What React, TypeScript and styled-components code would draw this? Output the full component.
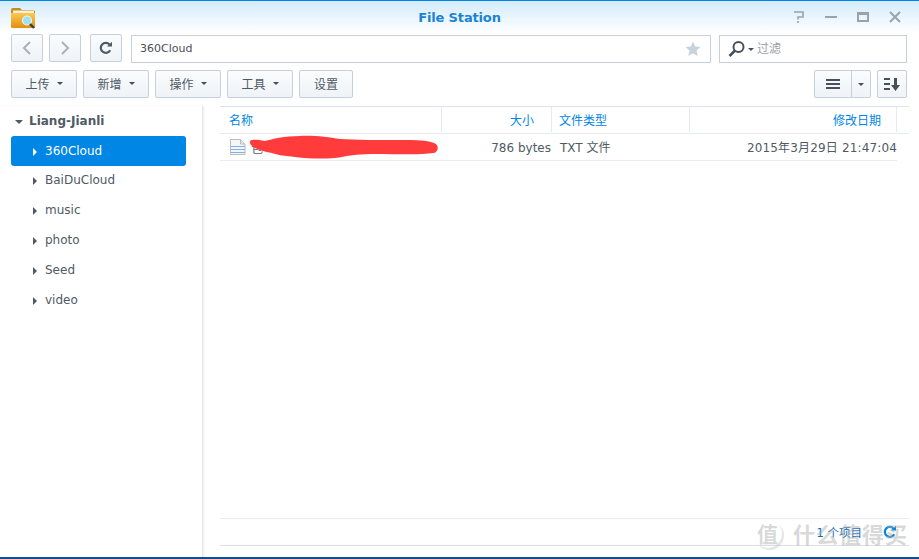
import React from 'react';
import styled, { createGlobalStyle } from 'styled-components';

const folders: string[] = ['360Cloud', 'BaiDuCloud', 'music', 'photo', 'Seed', 'video'];
const actions: string[] = ['上传', '新增', '操作', '工具'];

const App: React.FC = () => {
  return (
    <Window>
      <GlobalStyle />
      <TitleBar>
        <FolderLogo />
        <Title>File Station</Title>
        <WindowControls>
          <svg width="14" height="14" viewBox="0 0 14 14"><path d="M2 2h9v5H6v2.500M6 11v2" fill="none" stroke="#9aa3ab" strokeWidth="1.600" /></svg>
          <svg width="14" height="14" viewBox="0 0 14 14"><rect x="1" y="6" width="12" height="2" fill="#9aa3ab" /></svg>
          <svg width="14" height="14" viewBox="0 0 14 14"><path d="M1 2h12v10H1z M3 5v5h8V5z" fill="#9aa3ab" fillRule="evenodd" /></svg>
          <svg width="14" height="14" viewBox="0 0 14 14"><path d="M2 2l10 10M12 2L2 12" stroke="#9aa3ab" strokeWidth="2" /></svg>
        </WindowControls>
      </TitleBar>

      <NavBar>
        <IconButton>
          <svg width="12" height="16" viewBox="0 0 12 16"><path d="M9 2L3 8l6 6" fill="none" stroke="#a9b2bb" strokeWidth="2" /></svg>
        </IconButton>
        <IconButton>
          <svg width="12" height="16" viewBox="0 0 12 16"><path d="M3 2l6 6-6 6" fill="none" stroke="#a9b2bb" strokeWidth="2" /></svg>
        </IconButton>
        <RefreshButton>
          <svg width="14" height="14" viewBox="0 0 14 14">
            <path d="M11.200 9.200A5 5 0 1 1 10.600 3.600" fill="none" stroke="#4f5a64" strokeWidth="2.200" />
            <path d="M8 5.600h5V.8z" fill="#4f5a64" />
          </svg>
        </RefreshButton>
        <AddressBar>
          <span>360Cloud</span>
          <svg width="16" height="16" viewBox="0 0 16 16"><path d="M8 .5l2.200 5 5.300.5-4 3.600 1.200 5.400L8 12.200 3.300 15l1.200-5.400-4-3.600 5.300-.5z" fill="#c7d2de" /></svg>
        </AddressBar>
        <SearchBox>
          <svg width="18" height="18" viewBox="0 0 18 18">
            <circle cx="10.500" cy="7" r="5" fill="none" stroke="#46505a" strokeWidth="2" />
            <path d="M6.800 10.800L1.500 16" stroke="#46505a" strokeWidth="2.600" />
          </svg>
          <SearchCaret />
          <SearchHint>过滤</SearchHint>
        </SearchBox>
      </NavBar>

      <ActionBar>
        {actions.map((a) => (
          <ActionButton key={a}>{a}<Caret /></ActionButton>
        ))}
        <SettingsButton>设置</SettingsButton>
        <ViewGroup>
          <ViewMain>
            <svg width="14" height="10" viewBox="0 0 14 10"><path d="M0 0h14v2H0zM0 4h14v2H0zM0 8h14v2H0z" fill="#46505a" /></svg>
          </ViewMain>
          <ViewCaret><Caret /></ViewCaret>
        </ViewGroup>
        <SortButton>
          <svg width="16" height="13" viewBox="0 0 16 13"><path d="M0 0h6v2H0zM0 5h6v2H0zM0 10h6v2H0zM10 0h3v7h3l-4.500 6L7 7h3z" fill="#46505a" /></svg>
        </SortButton>
      </ActionBar>

      <Body>
        <Sidebar>
          <RootRow><RootCaret />Liang-Jianli</RootRow>
          {folders.map((f, i) => (
            <TreeRow key={f} $selected={i === 0}>
              <TreeArrow $selected={i === 0} />
              {f}
            </TreeRow>
          ))}
        </Sidebar>
        <Main>
          <HeaderRow>
            <NameHead>名称</NameHead>
            <SizeHead>大小</SizeHead>
            <TypeHead>文件类型</TypeHead>
            <DateHead>修改日期</DateHead>
          </HeaderRow>
          <FileRow>
            <NameCell>
              <FileIcon />
              <span>包</span>
              <Scribble viewBox="0 0 188 24">
                <path d="M0 6C3 4 8 5 15 6C22 4 35 1 50 1C62 0 78 2 90 4C105 5 130 5 150 5C165 5 180 5 186 9C189 12 188 17 184 18C170 20 150 19 125 19C112 19 100 20 92 22C80 24 62 24 45 22C35 21 28 20 22 18C14 17 8 15 3 12C1 10 -1 8 0 6Z" fill="#ff3b3b" />
              </Scribble>
            </NameCell>
            <SizeCell>786 bytes</SizeCell>
            <TypeCell>TXT 文件</TypeCell>
            <DateCell>2015年3月29日 21:47:04</DateCell>
          </FileRow>
          <Spacer />
          <Footer>
            <Count>1 个项目</Count>
            <svg width="14" height="14" viewBox="0 0 14 14">
              <path d="M11.200 9.200A5 5 0 1 1 10.600 3.600" fill="none" stroke="#0086e5" strokeWidth="2.200" />
              <path d="M8 5.600h5V.8z" fill="#0086e5" />
            </svg>
          </Footer>
        </Main>
      </Body>

      <Watermark>
        <WatermarkSeal>值</WatermarkSeal>
        <span>什么值得买</span>
      </Watermark>
    </Window>
  );
};

const FolderLogo: React.FC = () => (
  <LogoSvg width="25" height="22" viewBox="0 0 25 22">
    <defs>
      <linearGradient id="fold" x1="0" y1="0" x2="0" y2="1">
        <stop offset="0" stopColor="#fbc94e" />
        <stop offset="1" stopColor="#e28f14" />
      </linearGradient>
    </defs>
    <path d="M0 3q0-2 2-2h7l2 2h11q2 0 2 2v15q0 1-2 1H2q-2 0-2-2z" fill="#c98a1c" />
    <rect x="2" y="3.500" width="21" height="4" fill="#f6f1de" />
    <path d="M0 6h24v13q0 2-2 2H2q-2 0-2-2z" fill="url(#fold)" />
    <circle cx="16" cy="13.500" r="4.500" fill="#9fe0f5" stroke="#e9f4f6" strokeWidth="1.200" />
    <path d="M19 17l4 4" stroke="#3c4248" strokeWidth="2.400" />
  </LogoSvg>
);

const FileIcon: React.FC = () => (
  <svg width="16" height="16" viewBox="0 0 16 16">
    <path d="M.5.500h10l4.500 4.500v10.500H.5z" fill="#f5f5f6" stroke="#b8bbc0" />
    <path d="M10.500 .5v4.500H15" fill="#e6e7e9" stroke="#b8bbc0" />
    <path d="M1 7.500h14M1 10.500h14M1 13.500h14" stroke="#7fb0e8" />
  </svg>
);

const GlobalStyle = createGlobalStyle`
  html, body {
    margin: 0;
    padding: 0;
    background: #fff;
  }
  body {
    font-family: "DejaVu Sans", "Noto Sans CJK SC", sans-serif;
    font-size: 12px;
    color: #505a64;
  }
`;

const Window = styled.div`
  position: relative;
  display: flex;
  flex-direction: column;
  width: 919px;
  height: 559px;
  overflow: hidden;
  box-sizing: border-box;
  background: #fff;
  border-bottom: 2px solid #0f4c96;
`;

const TitleBar = styled.div`
  position: relative;
  display: flex;
  flex: none;
  align-items: center;
  justify-content: center;
  height: 33px;
  box-sizing: border-box;
  border-top: 1px solid #0086e5;
  background: linear-gradient(to bottom, #d3ebfb 0%, #ffffff 100%);
`;

const LogoSvg = styled.svg`
  position: absolute;
  left: 11px;
  top: 6px;
`;

const Title = styled.div`
  font-size: 13px;
  letter-spacing: -0.150px;
  font-weight: bold;
  color: #1a83d6;
  margin-top: 1px;
`;

const WindowControls = styled.div`
  position: absolute;
  top: 8px;
  right: 17px;
  display: flex;
  align-items: center;
  gap: 18px;
  height: 16px;
`;

const NavBar = styled.div`
  display: flex;
  flex: none;
  align-items: flex-start;
  height: 29px;
  padding: 1px 12px 0 11px;
`;

const IconButton = styled.div`
  display: flex;
  align-items: center;
  justify-content: center;
  width: 32px;
  height: 28px;
  box-sizing: border-box;
  margin-right: 6px;
  border: 1px solid #c5d0dc;
  border-radius: 2px;
  background: linear-gradient(to bottom, #fafcfd, #eff3f7);
`;

const RefreshButton = styled(IconButton)`
  margin-left: 3px;
  margin-right: 9px;
`;

const AddressBar = styled.div`
  display: flex;
  align-items: center;
  justify-content: space-between;
  width: 580px;
  height: 28px;
  margin-top: 1px;
  box-sizing: border-box;
  padding: 0 9px 1px 8px;
  border: 1px solid #c5d0dc;
  font-size: 11px;
  color: #4d4d55;
`;

const SearchBox = styled.div`
  display: flex;
  align-items: center;
  width: 188px;
  height: 28px;
  margin-top: 1px;
  margin-left: 8px;
  box-sizing: border-box;
  padding: 0 8px;
  border: 1px solid #c5d0dc;
`;

const SearchHint = styled.span`
  margin-left: 3px;
  padding-bottom: 3px;
  color: #9aa0a8;
`;

const Caret = styled.i`
  display: inline-block;
  width: 0;
  height: 0;
  margin-left: 4px;
  border-style: solid;
  border-width: 3px 3px 0 3px;
  border-color: #46505a transparent transparent transparent;
`;

const SearchCaret = styled(Caret)`
  margin-left: 2px;
`;

const ActionBar = styled.div`
  display: flex;
  flex: none;
  align-items: flex-start;
  height: 28px;
  margin-top: 7px;
  padding: 0 12px 0 11px;
`;

const ActionButton = styled.div`
  display: flex;
  align-items: center;
  justify-content: center;
  gap: 3px;
  width: 66px;
  height: 28px;
  box-sizing: border-box;
  margin-right: 6px;
  padding-bottom: 2px;
  border: 1px solid #c5d0dc;
  border-radius: 2px;
  background: linear-gradient(to bottom, #fafcfd, #eff3f7);
  white-space: pre;
`;

const SettingsButton = styled(ActionButton)`
  width: 54px;
  margin-right: auto;
`;

const ViewGroup = styled.div`
  display: flex;
  width: 57px;
  height: 28px;
  box-sizing: border-box;
  border: 1px solid #c5d0dc;
  border-radius: 2px;
  background: linear-gradient(to bottom, #fafcfd, #eff3f7);
`;

const ViewMain = styled.div`
  display: flex;
  align-items: center;
  justify-content: center;
  width: 36px;
  border-right: 1px solid #c5d0dc;
`;

const ViewCaret = styled.div`
  display: flex;
  flex: 1;
  align-items: center;
  justify-content: center;
  padding-right: 4px;
`;

const SortButton = styled(IconButton)`
  width: 30px;
  margin: 0 0 0 6px;
`;

const Body = styled.div`
  display: flex;
  flex: 1;
  min-height: 0;
  margin-top: 8px;
`;

const Sidebar = styled.div`
  flex: none;
  width: 203px;
  box-sizing: border-box;
  padding: 0 16px 0 11px;
  border-right: 1px solid #e6e8ea;
  box-shadow: 1px 0 2px rgba(0, 0, 0, 0.08);
`;

const RootRow = styled.div`
  display: flex;
  align-items: center;
  height: 30px;
  font-weight: bold;
  color: #505a64;
`;

const RootCaret = styled.i`
  width: 0;
  height: 0;
  margin: 1px 6px 0 4px;
  border-style: solid;
  border-width: 4px 4px 0 4px;
  border-color: #505a64 transparent transparent transparent;
`;

const TreeRow = styled.div<{ $selected: boolean }>`
  display: flex;
  align-items: center;
  height: 30px;
  box-sizing: border-box;
  padding-left: 22px;
  padding-bottom: ${(p) => (p.$selected ? 0 : 2)}px;
  border-radius: 3px;
  color: ${(p) => (p.$selected ? '#fff' : '#505a64')};
  background: ${(p) => (p.$selected ? '#0086e5' : 'transparent')};
`;

const TreeArrow = styled.i<{ $selected: boolean }>`
  width: 0;
  height: 0;
  margin: 2px 8px 0 0;
  border-style: solid;
  border-width: 4px 0 4px 4px;
  border-color: transparent transparent transparent ${(p) => (p.$selected ? '#fff' : '#505a64')};
`;

const Main = styled.div`
  display: flex;
  flex: 1;
  flex-direction: column;
  min-width: 0;
  margin: 0 10px 0 17px;
`;

const HeaderRow = styled.div`
  display: flex;
  flex: none;
  height: 28px;
  box-sizing: border-box;
  padding-bottom: 1px;
  border-top: 1px solid #dbe3ee;
  border-bottom: 1px solid #e8ecf0;
  color: #0086e5;
`;

const Cell = styled.div`
  display: flex;
  align-items: center;
  flex: none;
  box-sizing: border-box;
  height: 100%;
`;

const HeadCell = styled(Cell)`
  border-right: 1px solid #e3eaf1;
`;

const NameHead = styled(HeadCell)`
  width: 222px;
  padding-left: 9px;
`;

const SizeHead = styled(HeadCell)`
  width: 110px;
  justify-content: flex-end;
  padding-right: 17px;
`;

const TypeHead = styled(HeadCell)`
  width: 138px;
  padding-left: 7px;
`;

const DateHead = styled(HeadCell)`
  width: 207px;
  justify-content: flex-end;
  padding-right: 15px;
`;

const FileRow = styled.div`
  display: flex;
  flex: none;
  width: 677px;
  height: 27px;
  box-sizing: border-box;
  border-bottom: 1px solid #e8ecf0;
`;

const NameCell = styled(Cell)`
  position: relative;
  width: 222px;
  gap: 5px;
  padding-left: 10px;
`;

const Scribble = styled.svg`
  position: absolute;
  left: 30px;
  top: 1px;
  width: 188px;
  height: 24px;
`;

const SizeCell = styled(Cell)`
  width: 109px;
  margin-right: 1px;
  justify-content: flex-end;
  padding-top: 1px;
`;

const TypeCell = styled(Cell)`
  width: 138px;
  padding: 0 0 2px 8px;
`;

const DateCell = styled(Cell)`
  width: 207px;
  justify-content: flex-end;
  padding-bottom: 2px;
  letter-spacing: 0.150px;
`;

const Spacer = styled.div`
  flex: 1;
`;

const Footer = styled.div`
  display: flex;
  flex: none;
  align-items: center;
  justify-content: flex-end;
  gap: 21px;
  height: 28px;
  margin-bottom: 11px;
  box-sizing: border-box;
  padding-right: 12px;
  border-top: 1px solid #e8ecf0;
  border-bottom: 1px solid #d8e0e8;
  color: #0a6cc0;
`;

const Count = styled.span`
  font-size: 11.500px;
`;

const Watermark = styled.div`
  position: absolute;
  left: 753px;
  top: 519px;
  display: flex;
  align-items: center;
  gap: 11px;
  height: 29px;
  font-family: "Noto Sans CJK SC", sans-serif;
  font-size: 22px;
  line-height: 29px;
  font-weight: bold;
  letter-spacing: 1px;
  white-space: nowrap;
  color: rgba(170, 170, 170, 0.45);
  pointer-events: none;
`;

const WatermarkSeal = styled.span`
  display: flex;
  align-items: center;
  justify-content: center;
  width: 29px;
  height: 29px;
  border-radius: 50%;
  font-size: 21px;
  letter-spacing: 0;
  box-shadow: 2px 2px 0 rgba(180, 180, 180, 0.35);
`;

export default App;
